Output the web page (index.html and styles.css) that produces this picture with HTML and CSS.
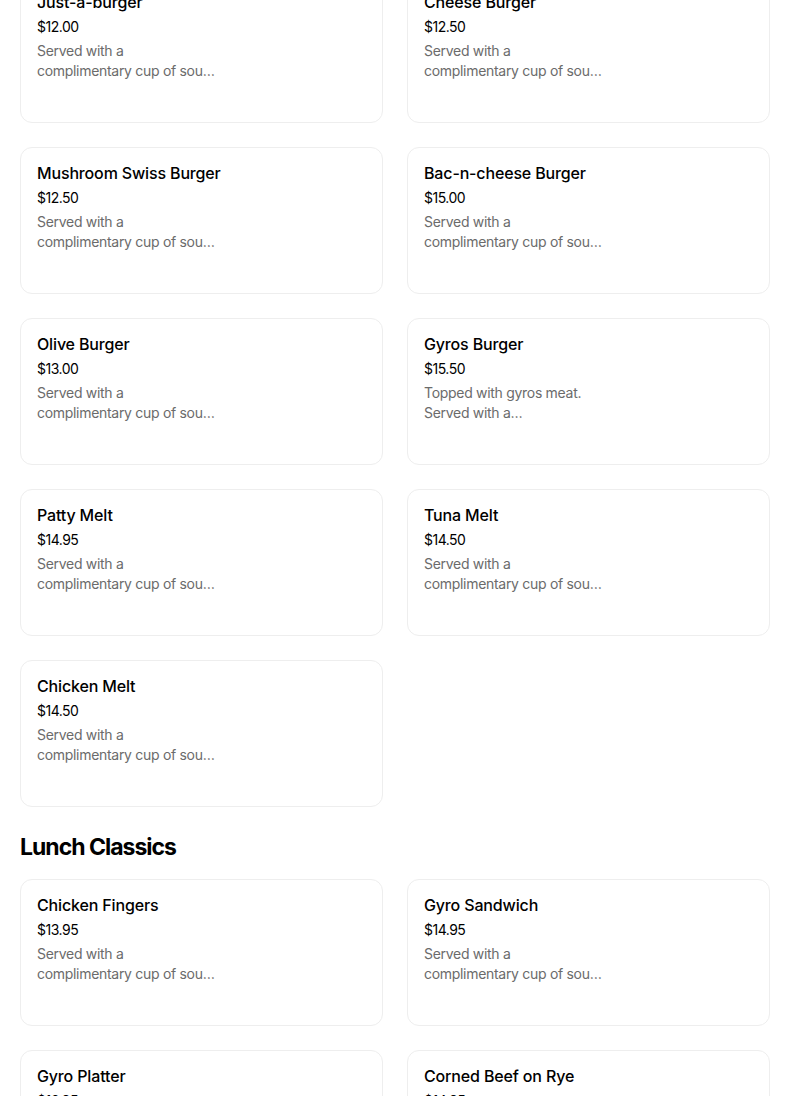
FILE: index.html
```html
<!DOCTYPE html>
<html lang="en">
<head>
<meta charset="utf-8">
<title>Menu</title>
<link rel="stylesheet" href="styles.css">
</head>
<body>
<main class="menu">
  <section class="section section-scrolled">
    <ul class="grid">
      <li class="card"><h3 class="title">Just-a-burger</h3><div class="price">$12.00</div><p class="desc">Served with a complimentary cup of soup or salad.</p></li>
      <li class="card"><h3 class="title">Cheese Burger</h3><div class="price">$12.50</div><p class="desc">Served with a complimentary cup of soup or salad.</p></li>
      <li class="card"><h3 class="title">Mushroom Swiss Burger</h3><div class="price">$12.50</div><p class="desc">Served with a complimentary cup of soup or salad.</p></li>
      <li class="card"><h3 class="title">Bac-n-cheese Burger</h3><div class="price">$15.00</div><p class="desc">Served with a complimentary cup of soup or salad.</p></li>
      <li class="card"><h3 class="title">Olive Burger</h3><div class="price">$13.00</div><p class="desc">Served with a complimentary cup of soup or salad.</p></li>
      <li class="card"><h3 class="title">Gyros Burger</h3><div class="price">$15.50</div><p class="desc">Topped with gyros meat. Served with a complimentary cup of soup or salad.</p></li>
      <li class="card"><h3 class="title">Patty Melt</h3><div class="price">$14.95</div><p class="desc">Served with a complimentary cup of soup or salad.</p></li>
      <li class="card"><h3 class="title">Tuna Melt</h3><div class="price">$14.50</div><p class="desc">Served with a complimentary cup of soup or salad.</p></li>
      <li class="card"><h3 class="title">Chicken Melt</h3><div class="price">$14.50</div><p class="desc">Served with a complimentary cup of soup or salad.</p></li>
    </ul>
  </section>
  <section class="section">
    <h2 class="section-title">Lunch Classics</h2>
    <ul class="grid">
      <li class="card"><h3 class="title">Chicken Fingers</h3><div class="price">$13.95</div><p class="desc">Served with a complimentary cup of soup or salad.</p></li>
      <li class="card"><h3 class="title">Gyro Sandwich</h3><div class="price">$14.95</div><p class="desc">Served with a complimentary cup of soup or salad.</p></li>
      <li class="card"><h3 class="title">Gyro Platter</h3><div class="price">$16.95</div><p class="desc">Served with a complimentary cup of soup or salad.</p></li>
      <li class="card"><h3 class="title">Corned Beef on Rye</h3><div class="price">$14.95</div><p class="desc">Served with a complimentary cup of soup or salad.</p></li>
    </ul>
  </section>
</main>
</body>
</html>
```

FILE: styles.css
```css
* { box-sizing: border-box; }
html, body { margin: 0; padding: 0; background: #fff; }
body {
  font-family: Inter, "Noto Sans", "Liberation Sans", sans-serif;
  color: #000;
  overflow: hidden;
}
.menu {
  padding: 0 34px 0 20px;
}
.section-scrolled {
  margin-top: -24px;
}
.section-title {
  margin: 24px 0 16px;
  font-size: 23px;
  line-height: 32px;
  font-weight: 700;
  letter-spacing: -1px;
}
.grid {
  list-style: none;
  margin: 0;
  padding: 0;
  display: grid;
  grid-template-columns: 1fr 1fr;
  gap: 24px;
}
.card {
  height: 147px;
  border: 1px solid #eeeeee;
  border-radius: 12px;
  padding: 15px 16px;
  display: flex;
  flex-direction: column;
  gap: 4px;
}
.title {
  margin: 0 0 1px;
  font-size: 16px;
  line-height: 20px;
  font-weight: 500;
  letter-spacing: -0.15px;
}
.price {
  font-size: 14px;
  line-height: 20px;
  color: #000;
  letter-spacing: -0.5px;
}
.desc {
  margin: 0;
  width: 180px;
  font-size: 14px;
  line-height: 20px;
  color: #6b6b6b;
  letter-spacing: -0.3px;
  display: -webkit-box;
  -webkit-box-orient: vertical;
  -webkit-line-clamp: 2;
  overflow: hidden;
}
```
